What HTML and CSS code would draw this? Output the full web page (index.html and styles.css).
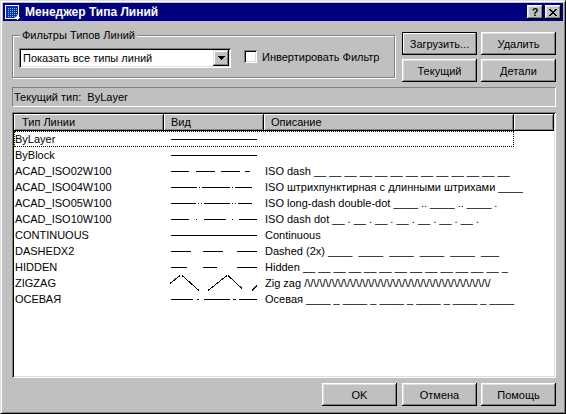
FILE: index.html
```html
<!DOCTYPE html>
<html lang="ru">
<head>
  <meta charset="UTF-8" />
  <title>Менеджер Типа Линий</title>
  <link rel="stylesheet" href="styles.css">
</head>
<body>

  <div class="window">
    <div class="titlebar">
      <svg class="app-icon" viewBox="0 0 16 16" width="16" height="16">
        <defs>
          <pattern id="dots" width="2" height="2" patternUnits="userSpaceOnUse">
            <rect width="1" height="1" fill="#8fb0ff" />
          </pattern>
        </defs>
        <rect x="1" y="1" width="14" height="14" fill="#ffffff" />
        <rect x="2" y="2" width="12" height="12" fill="#0030c8" />
        <rect x="3" y="3" width="10" height="10" fill="url(#dots)" />
        <path d="M11 13h5v1h-5zM13 11h1v5h-1z" fill="#ffffff" />
      </svg>
      <span class="title">Менеджер Типа Линий</span>
      <div class="title-buttons">
        <span class="tbtn help">?</span>
        <span class="tbtn">
          <svg viewBox="0 0 8 7" width="8" height="7">
            <path d="M0 0h2v1H0zM6 0h2v1H6zM1 1h2v1H1zM5 1h2v1H5zM2 2h4v1H2zM3 3h2v1H3zM2 4h4v1H2zM1 5h2v1H1zM5 5h2v1H5zM0 6h2v1H0zM6 6h2v1H6z" fill="#000" />
          </svg>
        </span>
      </div>
    </div>

    <div class="content">
      <!-- Filters and action buttons -->
      <div class="top-row">
        <fieldset class="group">
          <legend>Фильтры Типов Линий</legend>
          <div class="combo">
            <span class="combo-text">Показать все типы линий</span>
            <span class="combo-arrow">
              <svg viewBox="0 0 7 4" width="7" height="4">
                <path d="M0 0h7v1H0zM1 1h5v1H1zM2 2h3v1H2zM3 3h1v1H3z" fill="#000" />
              </svg>
            </span>
          </div>
          <label class="check"><span class="check-box"></span>Инвертировать Фильтр</label>
        </fieldset>

        <div class="button-grid">
          <button class="btn default">Загрузить...</button>
          <button class="btn">Удалить</button>
          <button class="btn">Текущий</button>
          <button class="btn">Детали</button>
        </div>
      </div>

      <div class="current">Текущий тип:&nbsp; ByLayer</div>

      <!-- Linetype list -->
      <div class="list">
        <div class="list-header">
          <div class="hcell c1">Тип Линии</div>
          <div class="hcell c2">Вид</div>
          <div class="hcell c3">Описание</div>
          <div class="hcell c4"></div>
        </div>

        <div class="list-body">
          <div class="row focus">
            <span class="name">ByLayer</span>
            <span class="preview"><svg width="88" height="16"><path d="M1 8.5H87" /></svg></span>
            <span class="desc"></span>
          </div>
          <div class="row">
            <span class="name">ByBlock</span>
            <span class="preview"><svg width="88" height="16"><path d="M1 8.5H87" /></svg></span>
            <span class="desc"></span>
          </div>
          <div class="row">
            <span class="name">ACAD_ISO02W100</span>
            <span class="preview"><svg width="88" height="16"><path d="M1 8.5H19M26 8.5H45M51 8.5H70M75 8.5H80" /></svg></span>
            <span class="desc">ISO dash __ __ __ __ __ __ __ __ __ __ __ __ __</span>
          </div>
          <div class="row">
            <span class="name">ACAD_ISO04W100</span>
            <span class="preview"><svg width="88" height="16"><path d="M1 8.5H27M29 8.5H30M32 8.5H60M62 8.5H63M65 8.5H82" /></svg></span>
            <span class="desc">ISO штрихпунктирная с длинными штрихами ____</span>
          </div>
          <div class="row">
            <span class="name">ACAD_ISO05W100</span>
            <span class="preview"><svg width="88" height="16"><path d="M1 8.5H26M28 8.5H29M31 8.5H32M34 8.5H60M62 8.5H63M65 8.5H66M68 8.5H82" /></svg></span>
            <span class="desc">ISO long-dash double-dot ____ .. ____ .. ____ .</span>
          </div>
          <div class="row">
            <span class="name">ACAD_ISO10W100</span>
            <span class="preview"><svg width="88" height="16"><path d="M1 8.5H19M26 8.5H27M34 8.5H56M62 8.5H63M69 8.5H87" /></svg></span>
            <span class="desc">ISO dash dot __ . __ . __ . __ . __ . __ . __ .</span>
          </div>
          <div class="row">
            <span class="name">CONTINUOUS</span>
            <span class="preview"><svg width="88" height="16"><path d="M1 8.5H87" /></svg></span>
            <span class="desc">Continuous</span>
          </div>
          <div class="row">
            <span class="name">DASHEDX2</span>
            <span class="preview"><svg width="88" height="16"><path d="M1 8.5H21M33 8.5H53M67 8.5H87" /></svg></span>
            <span class="desc">Dashed (2x) ____  ____  ____  ____  ____  ___</span>
          </div>
          <div class="row">
            <span class="name">HIDDEN</span>
            <span class="preview"><svg width="88" height="16"><path d="M1 8.5H17M33 8.5H47M67 8.5H87" /></svg></span>
            <span class="desc">Hidden __ __ __ __ __ __ __ __ __ __ __ __ __ _</span>
          </div>
          <div class="row">
            <span class="name">ZIGZAG</span>
            <span class="preview"><svg width="88" height="16"><path d="M0 8.5L10 0.5M12 0.5L29 15.5M38 15.5L57 0.5M58 0.5L72 13.5M82 15.5L87 10.5" /></svg></span>
            <span class="desc">Zig zag /\/\/\/\/\/\/\/\/\/\/\/\/\/\/\/\/\/\/\/\/\/\/\/\/\/\/\/\/\/\/</span>
          </div>
          <div class="row">
            <span class="name">ОСЕВАЯ</span>
            <span class="preview"><svg width="88" height="16"><path d="M1 8.5H23M27 8.5H29M34 8.5H60M63 8.5H66M69 8.5H87" /></svg></span>
            <span class="desc">Осевая ____ _ ____ _ ____ _ ____ _ ____ _ ____</span>
          </div>
        </div>
      </div>

      <div class="bottom-row">
        <button class="btn ok">OK</button>
        <button class="btn">Отмена</button>
        <button class="btn">Помощь</button>
      </div>
    </div>
  </div>

</body>
</html>
```

FILE: styles.css
```css
:root {
  --face: #c0c0c0;
  --shadow: #808080;
  --light: #dfdfdf;
  --white: #ffffff;
  --dark: #000000;
  --title: #000080;
}

* {
  box-sizing: border-box;
  margin: 0;
  padding: 0;
}

body {
  font-family: 'Liberation Sans', Arial, sans-serif;
  font-size: 11px;
  color: #000;
  background-color: var(--face);
}

.window {
  width: 566px;
  height: 414px;
  display: flex;
  flex-direction: column;
  padding: 2px;
  border: 1px solid;
  border-color: var(--light) var(--dark) var(--dark) var(--light);
  box-shadow: inset 1px 1px var(--white), inset -1px -1px var(--shadow);
  background-color: var(--face);
}

/* Title bar */
.titlebar {
  height: 18px;
  display: flex;
  align-items: center;
  padding: 0 2px 0 1px;
  background-color: var(--title);
  color: var(--white);
}

.app-icon {
  display: block;
}

.title {
  margin-left: 5px;
  font-size: 12px;
  font-weight: bold;
}

.title-buttons {
  margin-left: auto;
  display: flex;
  gap: 2px;
}

.tbtn {
  width: 16px;
  height: 14px;
  display: flex;
  align-items: center;
  justify-content: center;
  background-color: var(--face);
  color: #000;
  box-shadow: inset -1px -1px var(--dark), inset 1px 1px var(--white), inset -2px -2px var(--shadow), inset 2px 2px var(--light);
}

.tbtn.help {
  font-size: 11px;
  font-weight: bold;
  line-height: 14px;
}

/* Dialog body */
.content {
  flex: 1;
  display: flex;
  flex-direction: column;
  padding: 11px 7px 5px 9px;
}

.top-row {
  display: flex;
  justify-content: space-between;
  align-items: flex-start;
}

.group {
  width: 383px;
  margin-top: -3px;
  padding: 6px 6px 9px;
  display: flex;
  align-items: flex-start;
  border: 1px solid var(--shadow);
  box-shadow: 1px 1px 0 var(--white), inset 1px 1px 0 var(--white);
}

.group legend {
  margin-left: 1px;
  padding: 0 2px;
  line-height: 13px;
  background-color: var(--face);
}

.combo {
  width: 212px;
  height: 20px;
  display: flex;
  align-items: center;
  padding: 2px;
  background-color: var(--white);
  box-shadow: inset 1px 1px var(--shadow), inset -1px -1px var(--white), inset 2px 2px var(--dark), inset -2px -2px var(--light);
}

.combo-text {
  flex: 1;
  padding-left: 2px;
}

.combo-arrow {
  width: 16px;
  height: 16px;
  display: flex;
  align-items: center;
  justify-content: center;
  background-color: var(--face);
  box-shadow: inset -1px -1px var(--dark), inset 1px 1px var(--light), inset -2px -2px var(--shadow), inset 2px 2px var(--white);
}

.combo-arrow svg {
  display: block;
}

.check {
  display: flex;
  align-items: center;
  gap: 5px;
  margin: 2px 0 0 13px;
}

.check-box {
  width: 13px;
  height: 13px;
  background-color: var(--white);
  box-shadow: inset 1px 1px var(--shadow), inset -1px -1px var(--white), inset 2px 2px var(--dark), inset -2px -2px var(--light);
}

.button-grid {
  display: grid;
  grid-template-columns: 75px 75px;
  grid-auto-rows: 23px;
  gap: 4px;
}

.btn {
  width: 75px;
  height: 23px;
  font: inherit;
  color: #000;
  border: none;
  background-color: var(--face);
  box-shadow: inset -1px -1px var(--dark), inset 1px 1px var(--white), inset -2px -2px var(--shadow), inset 2px 2px var(--light);
}

.btn.default {
  box-shadow: inset 0 0 0 1px var(--dark), inset -2px -2px var(--shadow), inset 2px 2px var(--white);
}

.current {
  margin-top: 5px;
  height: 20px;
  padding-left: 1px;
  line-height: 18px;
  border: 1px solid;
  border-color: var(--shadow) var(--white) var(--white) var(--shadow);
}

/* List view */
.list {
  flex: 1;
  margin-top: 5px;
  padding: 2px;
  display: flex;
  flex-direction: column;
  background-color: var(--white);
  box-shadow: inset 1px 1px var(--shadow), inset -1px -1px var(--white), inset 2px 2px var(--dark), inset -2px -2px var(--light);
}

.list-header {
  display: flex;
  height: 17px;
}

.hcell {
  padding-left: 7px;
  line-height: 16px;
  background-color: var(--face);
  box-shadow: inset -1px -1px var(--dark), inset 1px 1px var(--white), inset -2px -2px var(--shadow);
}

.hcell.c1 { width: 150px; padding-left: 8px; }
.hcell.c2 { width: 100px; }
.hcell.c3 { width: 250px; }
.hcell.c4 { flex: 1; }

.row {
  width: 500px;
  height: 16px;
  display: flex;
  align-items: center;
}

.row.focus {
  outline: 1px dotted #000;
  outline-offset: -1px;
}

.name {
  width: 150px;
  padding-left: 1px;
}

.preview {
  width: 100px;
  padding-left: 6px;
  display: flex;
}

.preview svg {
  display: block;
}

.preview path {
  fill: none;
  stroke: #000;
  stroke-width: 1;
  shape-rendering: crispEdges;
}

.desc {
  width: 250px;
  padding-left: 1px;
  white-space: pre;
}

.bottom-row {
  margin-top: 5px;
  display: flex;
  justify-content: flex-end;
  gap: 4px;
}

.btn.ok {
  margin-right: 1px;
}
```
